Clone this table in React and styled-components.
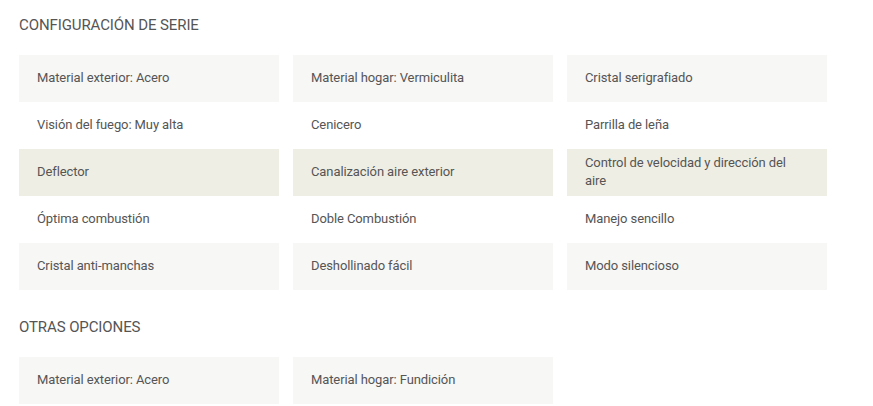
import React from "react";
import styled, { createGlobalStyle } from "styled-components";

const Global = createGlobalStyle`
  html, body { margin: 0; padding: 0; background: #fff; }
  body { font-family: Roboto, "Liberation Sans", sans-serif; }
`;

const Page = styled.div`
  padding: 15px 0 0 19px;
  width: 808px;
`;

const Section = styled.section`
  margin-bottom: 27px;
`;

const Heading = styled.h2`
  margin: 0 0 20px 0;
  font-size: 15px;
  line-height: 20px;
  font-weight: 400;
  color: #555;
  text-transform: uppercase;
  letter-spacing: -0.1px;
`;

const Grid = styled.div`
  display: grid;
  grid-template-columns: repeat(3, 260px);
  column-gap: 14px;
`;

const bgs = {
  grey: "#f7f7f5",
  white: "#ffffff",
  beige: "#efeee4",
};

const Cell = styled.div`
  min-height: 47px;
  box-sizing: border-box;
  padding: 3px 18px 5px;
  display: flex;
  align-items: center;
  background: ${(p) => bgs[p.$tone] || "#fff"};
  font-size: 13px;
  line-height: 18px;
  color: #555;
  letter-spacing: -0.1px;
`;

const serie = [
  { tone: "grey", items: ["Material exterior: Acero", "Material hogar: Vermiculita", "Cristal serigrafiado"] },
  { tone: "white", items: ["Visión del fuego: Muy alta", "Cenicero", "Parrilla de leña"] },
  { tone: "beige", items: ["Deflector", "Canalización aire exterior", "Control de velocidad y dirección del aire"] },
  { tone: "white", items: ["Óptima combustión", "Doble Combustión", "Manejo sencillo"] },
  { tone: "grey", items: ["Cristal anti-manchas", "Deshollinado fácil", "Modo silencioso"] },
];

const otras = [
  { tone: "grey", items: ["Material exterior: Acero", "Material hogar: Fundición"] },
];

function Table({ rows }) {
  return (
    <Grid>
      {rows.map((r, i) =>
        r.items.map((t, j) => (
          <Cell key={`${i}-${j}`} $tone={r.tone}>
            {t}
          </Cell>
        ))
      )}
    </Grid>
  );
}

export default function App() {
  return (
    <>
      <Global />
      <Page>
        <Section>
          <Heading>Configuración de serie</Heading>
          <Table rows={serie} />
        </Section>
        <Section>
          <Heading>Otras opciones</Heading>
          <Table rows={otras} />
        </Section>
      </Page>
    </>
  );
}
